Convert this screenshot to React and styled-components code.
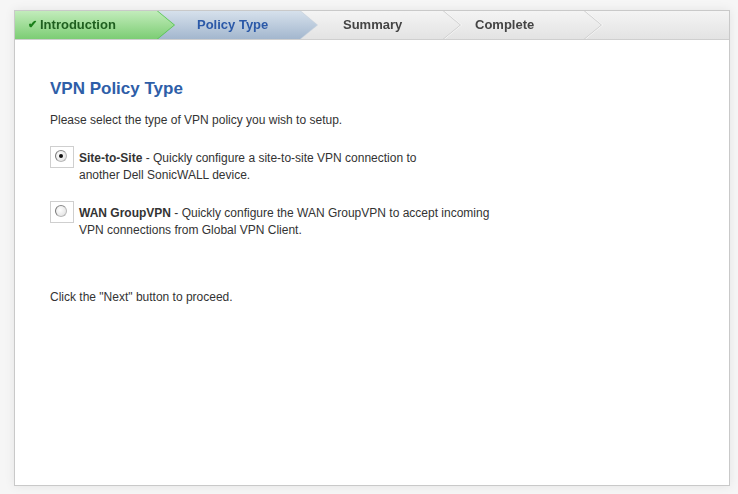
import styled, { createGlobalStyle } from 'styled-components'

const GlobalStyle = createGlobalStyle`
  html, body {
    margin: 0;
    background: #f6f6f6;
  }
  body {
    padding: 10px 8px 8px 14px;
    font-family: Arial, "Liberation Sans", sans-serif;
  }
`

const steps = [
    { label: 'Introduction', state: 'done', pad: 13, width: 159 },
    { label: 'Policy Type', state: 'active', pad: 40, width: 160 },
    { label: 'Summary', state: 'todo', pad: 43, width: 160 },
    { label: 'Complete', state: 'todo', pad: 32, width: 158 },
]

const options = [
    {
        name: 'Site-to-Site',
        text: ' - Quickly configure a site-to-site VPN connection to',
        rest: 'another Dell SonicWALL device.',
        checked: true,
    },
    {
        name: 'WAN GroupVPN',
        text: ' - Quickly configure the WAN GroupVPN to accept incoming',
        rest: 'VPN connections from Global VPN Client.',
        checked: false,
    },
]

const App = () => {
    return (
        <>
            <GlobalStyle />
            <Panel>
                <StepBar>
                    {steps.map((s, i) => (
                        <StepEdge key={s.label} state={s.state} style={{ zIndex: 10 - i }}>
                            <Step state={s.state} pad={s.pad} width={s.width}>
                                {s.state === 'done' && <Check>✔</Check>}
                                {s.label}
                            </Step>
                        </StepEdge>
                    ))}
                </StepBar>
                <Content>
                    <Title>VPN Policy Type</Title>
                    <Text>Please select the type of VPN policy you wish to setup.</Text>
                    <Options>
                        {options.map(o => (
                            <Option key={o.name}>
                                <RadioBox>
                                    <Radio checked={o.checked} />
                                </RadioBox>
                                <OptionText>
                                    <b>{o.name}</b>{o.text}
                                    <br />
                                    {o.rest}
                                </OptionText>
                            </Option>
                        ))}
                    </Options>
                    <Text>Click the "Next" button to proceed.</Text>
                </Content>
            </Panel>
        </>
    )
}

const Panel = styled.div`
width: 714px;
height: 474px;
background: #fff;
border: 1px solid #c9c9c9;
box-shadow: 0 0 10px rgba(0, 0, 0, 0.08);
display: flex;
flex-direction: column;
`;

const StepBar = styled.div`
height: 28px;
display: flex;
background: linear-gradient(#f4f4f4, #e3e3e3);
border-bottom: 1px solid #cfcfcf;
`;

const StepEdge = styled.div`
position: relative;
margin-right: -17px;
filter: ${p => p.state === 'done'
        ? 'drop-shadow(1px 0 0 #4fc44a)'
        : p.state === 'active'
            ? 'drop-shadow(1px 0 0 #c9d3de)'
            : 'drop-shadow(1px 0 0 #c8c8c8) drop-shadow(1px 0 0 #fafafa)'};
`;

const Step = styled.div`
width: ${p => p.width}px;
height: 28px;
box-sizing: border-box;
padding: 0 0 2px ${p => p.pad}px;
display: flex;
align-items: center;
font-size: 13px;
font-weight: bold;
clip-path: polygon(0 0, calc(100% - 17px) 0, 100% 50%, calc(100% - 17px) 100%, 0 100%);
color: ${p => p.state === 'done' ? '#1f5f1f' : p.state === 'active' ? '#2b59a8' : '#444'};
background: ${p => p.state === 'done'
        ? 'linear-gradient(#c2ecbb, #7ccd74)'
        : p.state === 'active'
            ? 'linear-gradient(#d6e1ec, #a3b7ce)'
            : 'linear-gradient(#f4f4f4, #e3e3e3)'};
`;

const Check = styled.span`
color: #1a7f1a;
font-size: 11px;
margin-right: 3px;
`;

const Content = styled.div`
padding: 39px 35px 0;
color: #333;
font-size: 12px;
`;

const Title = styled.h1`
margin: 0 0 13px;
font-size: 17px;
line-height: 20px;
color: #2e5ea8;
`;

const Text = styled.p`
margin: 0;
line-height: 17px;
`;

const Options = styled.div`
display: flex;
flex-direction: column;
gap: 17px;
margin: 17px 0 50px;
`;

const Option = styled.div`
display: flex;
align-items: flex-start;
gap: 5px;
`;

const RadioBox = styled.div`
width: 22px;
height: 20px;
border: 1px solid #cfcfcf;
display: flex;
align-items: center;
justify-content: center;
flex-shrink: 0;
`;

const Radio = styled.span`
width: 10px;
height: 10px;
border-radius: 50%;
border: 1px solid #b8b8b8;
border-left-color: #777;
border-top-color: #8a8a8a;
background: radial-gradient(circle at 40% 40%, #fff, #dcdcdc);
display: flex;
align-items: center;
justify-content: center;
margin: -2px 2px 0 0;
&::after {
    content: '';
    width: 4px;
    height: 4px;
    border-radius: 50%;
    background: ${p => p.checked ? '#111' : 'transparent'};
}
`;

const OptionText = styled.div`
line-height: 17px;
padding-top: 4px;
`;

export default App
